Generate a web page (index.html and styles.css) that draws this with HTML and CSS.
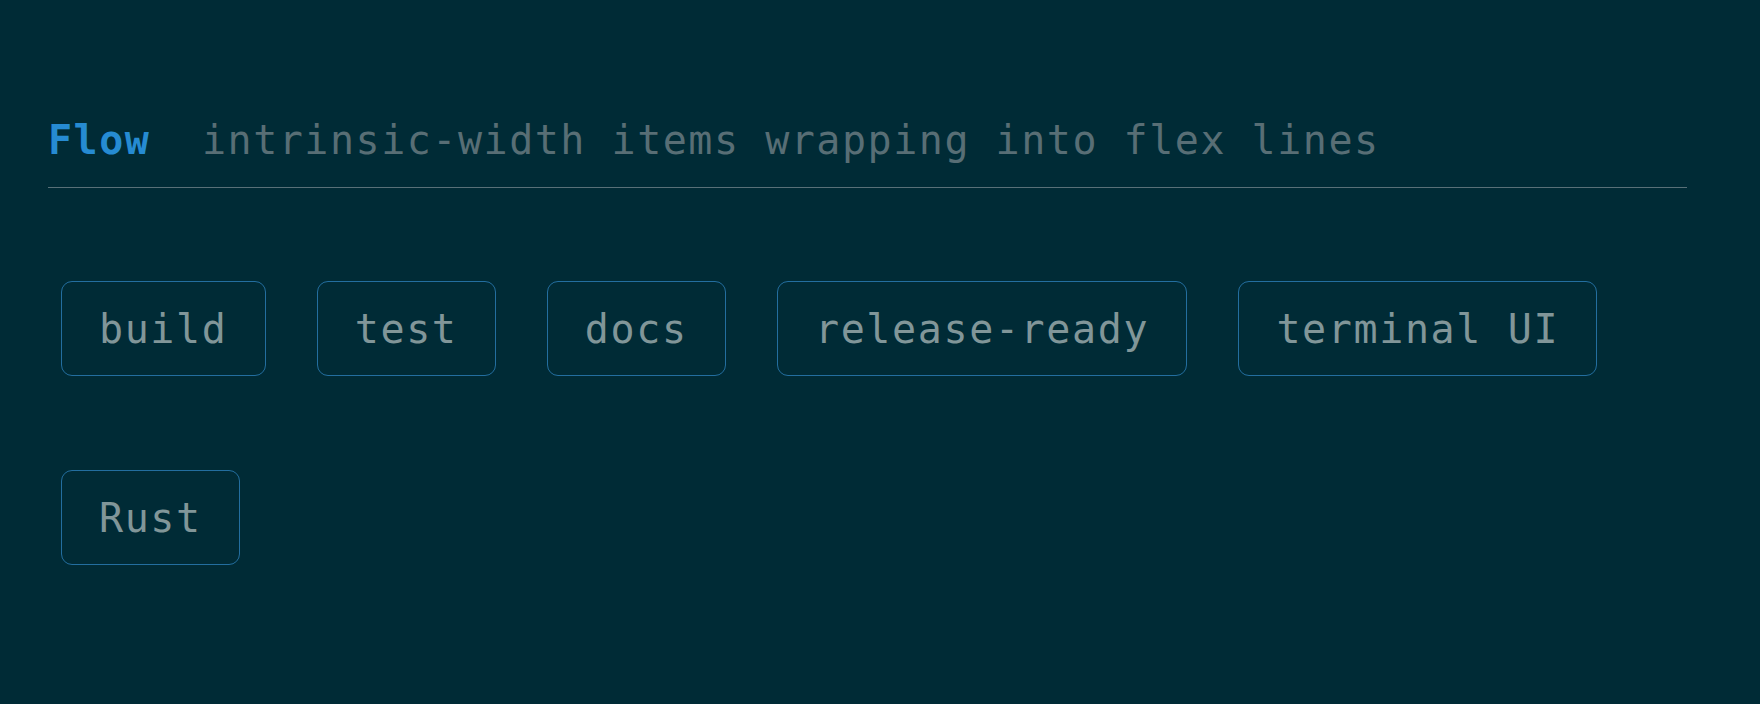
FILE: index.html
```html
<!DOCTYPE html>
<html lang="en">
<head>
<meta charset="utf-8">
<title>Flow</title>
<link rel="stylesheet" href="styles.css">
</head>
<body>
<main class="panel">
  <header class="panel-head">
    <span class="panel-title">Flow</span>
    <span class="panel-desc">intrinsic-width items wrapping into flex lines</span>
  </header>
  <div class="tags">
    <span class="tag">build</span>
    <span class="tag">test</span>
    <span class="tag">docs</span>
    <span class="tag">release-ready</span>
    <span class="tag">terminal UI</span>
    <span class="tag">Rust</span>
  </div>
</main>
</body>
</html>
```
FILE: styles.css
```css
html, body {
  margin: 0;
  padding: 0;
  background: #002b36;
}
body {
  font-family: "DejaVu Sans Mono", "Liberation Mono", monospace;
  font-size: 40px;
  letter-spacing: 1.52px;
  color: #839496;
  width: 1760px;
  height: 704px;
  overflow: hidden;
}
.panel {
  width: 1639px;
  padding: 116px 0 0 48px;
}
.panel-head {
  display: flex;
  align-items: baseline;
  gap: 51.5px;
  padding-bottom: 22px;
  border-bottom: 1px solid #587078;
  line-height: 49px;
}
.panel-title {
  color: #268bd2;
  font-weight: bold;
}
.panel-desc {
  color: #586e75;
}
.tags {
  display: flex;
  flex-wrap: wrap;
  column-gap: 50.8px;
  row-gap: 94px;
  padding: 93px 12px 0 12.7px;
}
.tag {
  display: block;
  padding: 21.5px 37.25px;
  line-height: 50px;
  letter-spacing: 1.62px;
  border: 1px solid #236e9f;
  border-radius: 11px;
  color: #819699;
}
```
